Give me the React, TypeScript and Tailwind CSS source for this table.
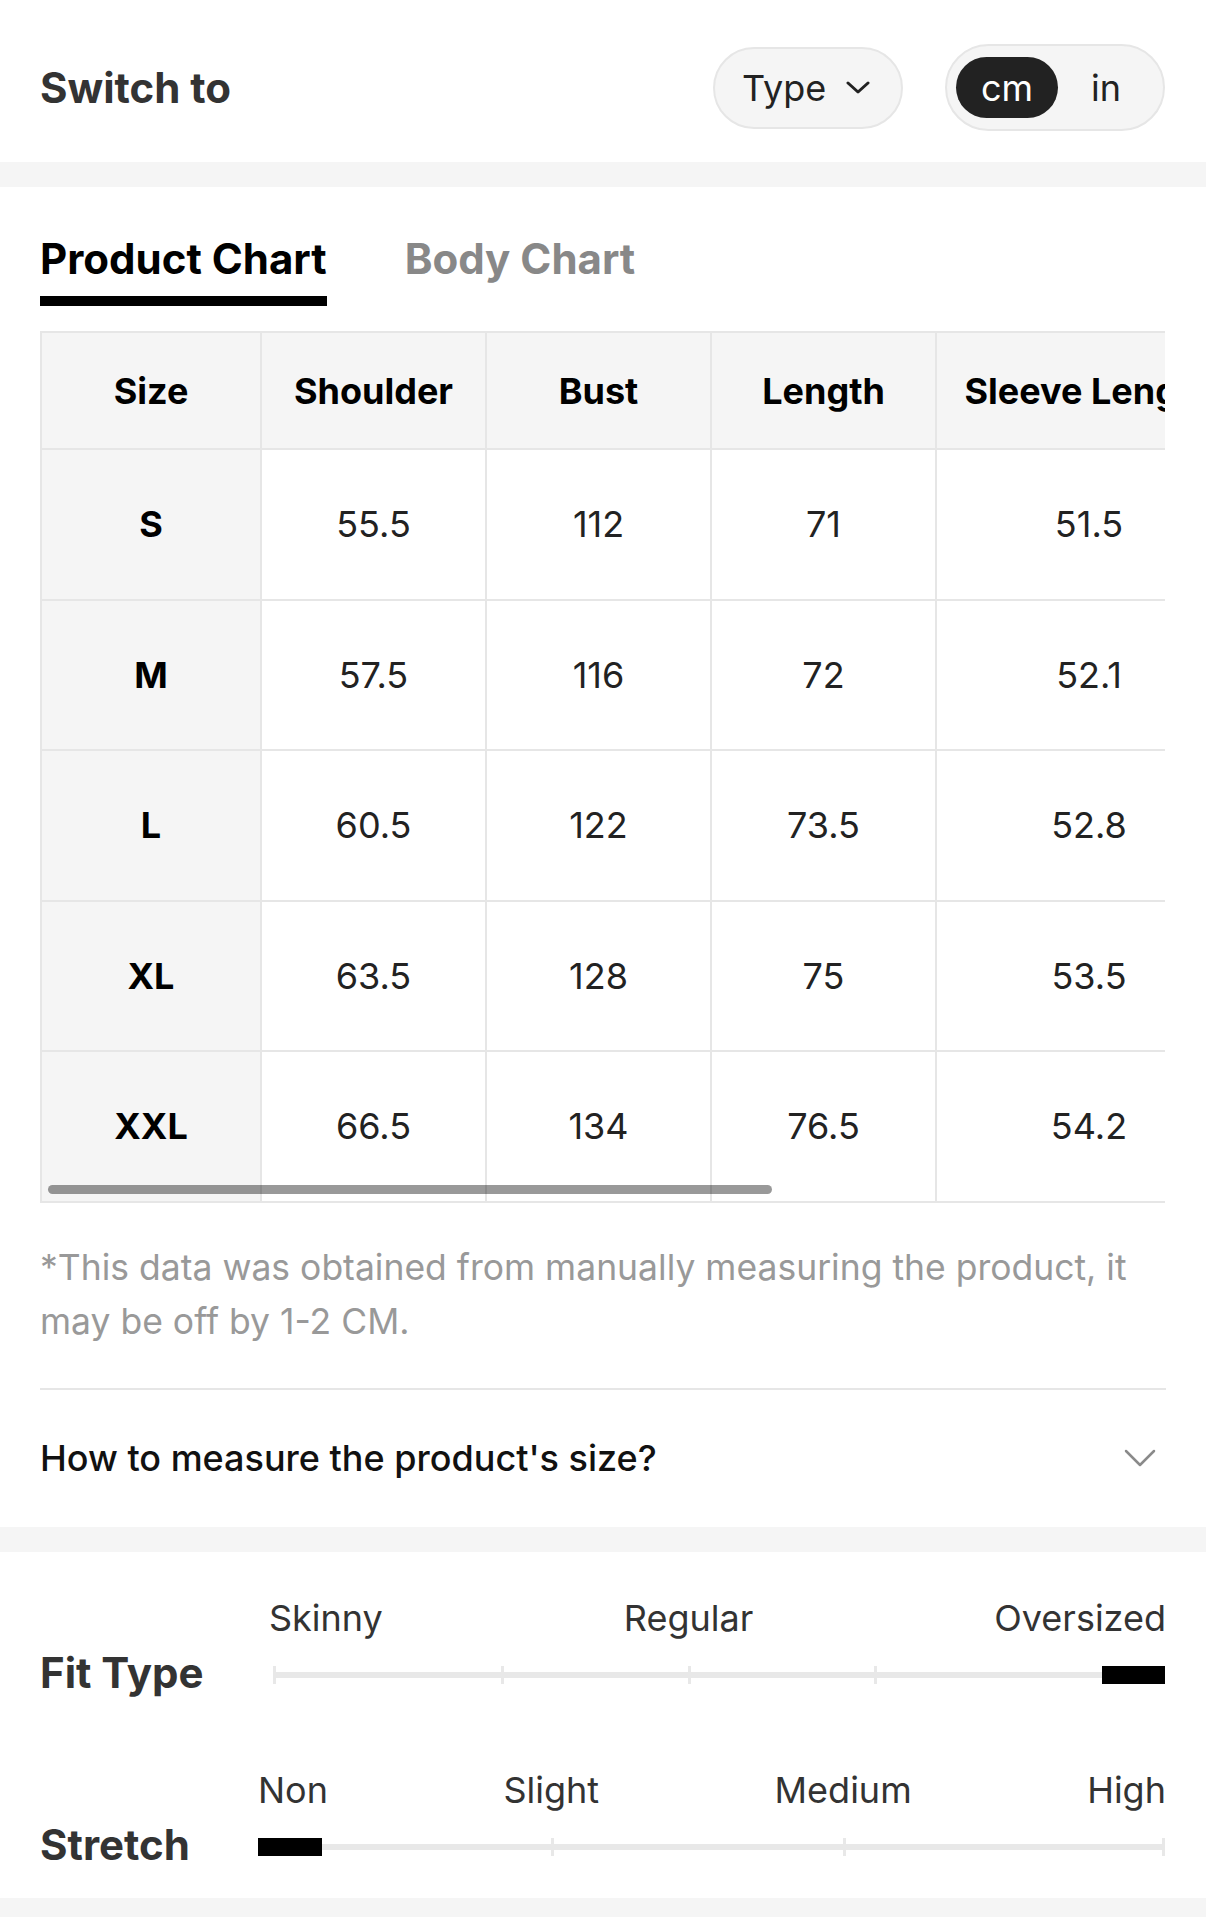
import React from "react";

const columns = [
  { key: "size", label: "Size", width: "w-[220px]" },
  { key: "shoulder", label: "Shoulder", width: "w-[225px]" },
  { key: "bust", label: "Bust", width: "w-[225px]" },
  { key: "length", label: "Length", width: "w-[225px]" },
  { key: "sleeve", label: "Sleeve Length", width: "w-[306px]" }
];

const rows = [
  { size: "S", shoulder: "55.5", bust: "112", length: "71", sleeve: "51.5" },
  { size: "M", shoulder: "57.5", bust: "116", length: "72", sleeve: "52.1" },
  { size: "L", shoulder: "60.5", bust: "122", length: "73.5", sleeve: "52.8" },
  { size: "XL", shoulder: "63.5", bust: "128", length: "75", sleeve: "53.5" },
  { size: "XXL", shoulder: "66.5", bust: "134", length: "76.5", sleeve: "54.2" }
];

type SliderProps = {
  title: string;
  labels: string[];
  trackWidth: number;
  ticks: number[];
  block: { left: number; width: number };
  offset?: boolean;
};

const Slider: React.FC<SliderProps> = ({ title, labels, trackWidth, ticks, block, offset }) => {
  return (
    <div className="grid grid-cols-[218px_1fr]">
      <div />
      <div className={`flex justify-between text-[36px] leading-[44px] text-[#333] ${offset ? "pl-[11px]" : ""}`}>
        {labels.map(l => (
          <span key={l}>{l}</span>
        ))}
      </div>
      <div className="mt-[8px] text-[42px] font-bold leading-[50px] text-[#333]">{title}</div>
      <div className={`mt-[8px] flex items-center pt-[5px] ${offset ? "pl-[15px]" : ""}`}>
        {/* track */}
        <div className="relative h-[6px] bg-[#e8e8e8]" style={{ width: trackWidth }}>
          {ticks.map(t => (
            <span key={t} className="absolute top-[-6px] h-[18px] w-[3px] bg-[#e8e8e8]" style={{ left: t }} />
          ))}
          <span className="absolute top-[-6px] h-[18px] bg-black" style={{ left: block.left, width: block.width }} />
        </div>
      </div>
    </div>
  );
};

const App: React.FC = () => {
  return (
    <div className="w-[1206px] bg-white font-['Inter','Liberation_Sans',sans-serif] text-[#222]">
      {/* Switch header */}
      <div className="flex items-center justify-between pl-10 pr-[41px] pt-[44px] pb-[31px]">
        <h2 className="text-[42px] font-bold leading-[50px] text-[#333]">Switch to</h2>
        <div className="flex items-center gap-[42px]">
          <button className="flex h-[82px] w-[190px] items-center gap-[20px] rounded-full border-2 border-[#e6e6e6] bg-[#f5f5f5] pl-[27px] text-[36px] text-[#222]">
            Type
            <svg width="24" height="14" viewBox="0 0 24 14" fill="none">
              <polyline points="2,2 12,11 22,2" stroke="#222" strokeWidth="3" strokeLinecap="round" strokeLinejoin="round" />
            </svg>
          </button>
          <div className="flex h-[87px] w-[220px] items-center rounded-full border-2 border-[#e6e6e6] bg-[#f5f5f5] pl-[9px] text-[36px]">
            <span className="flex h-[61px] w-[102px] items-center justify-center rounded-full bg-[#222] text-white">cm</span>
            <span className="w-[96px] text-center text-[#222]">in</span>
          </div>
        </div>
      </div>

      <div className="h-[25px] bg-[#f5f5f5]" />

      {/* Chart */}
      <div className="px-10 pt-[47px]">
        <div className="flex gap-[78px]">
          <div className="flex flex-col">
            <span className="text-[42px] font-bold leading-[50px] text-black">Product Chart</span>
            <span className="mt-[12px] h-[10px] bg-black" />
          </div>
          <div className="flex flex-col">
            <span className="text-[42px] font-bold leading-[50px] text-[#888]">Body Chart</span>
          </div>
        </div>

        <div className="relative mt-[25px] w-[1125px] overflow-hidden">
          <div className="w-max border-l-2 border-t-2 border-[#e6e6e6]">
            <div className="flex bg-[#f5f5f5]">
              {columns.map(c => (
                <div
                  key={c.key}
                  className={`${c.width} flex h-[117px] shrink-0 items-center justify-center border-b-2 border-r-2 border-[#e6e6e6] text-[36px] font-bold text-black`}
                >
                  {c.label}
                </div>
              ))}
            </div>
            {rows.map(r => (
              <div key={r.size} className="flex">
                {columns.map(c => (
                  <div
                    key={c.key}
                    className={`${c.width} flex h-[150.5px] shrink-0 items-center justify-center border-b-2 border-r-2 border-[#e6e6e6] text-[36px] ${
                      c.key === "size" ? "bg-[#f5f5f5] font-bold text-black" : "text-[#222]"
                    }`}
                  >
                    {r[c.key as keyof typeof r]}
                  </div>
                ))}
              </div>
            ))}
          </div>
          {/* scrollbar */}
          <div className="absolute bottom-[9px] left-[8px] h-[9px] w-[724px] rounded-full bg-black/40" />
        </div>

        <p className="mt-[38px] text-[35.5px] leading-[54px] text-[#999]">
          *This data was obtained from manually measuring the product, it may be off by 1-2 CM.
        </p>

        <div className="mt-[39px] h-[2px] bg-[#e6e6e6]" />

        <div className="flex h-[137px] items-center justify-between">
          <span className="text-[36px] font-medium text-[#111]">How to measure the product's size?</span>
          <svg width="32" height="18" viewBox="0 0 32 18" fill="none" className="mr-[10px]">
            <polyline points="2,2 16,16 30,2" stroke="#8a8a8a" strokeWidth="2.5" strokeLinecap="round" strokeLinejoin="round" />
          </svg>
        </div>
      </div>

      <div className="h-[25px] bg-[#f5f5f5]" />

      {/* Fit & stretch */}
      <div className="px-10 pt-[44px] pb-[28px]">
        <Slider
          title="Fit Type"
          labels={["Skinny", "Regular", "Oversized"]}
          trackWidth={892}
          ticks={[0, 228, 415, 601]}
          block={{ left: 829, width: 63 }}
          offset
        />
        <div className="mt-[70px]">
          <Slider
            title="Stretch"
            labels={["Non", "Slight", "Medium", "High"]}
            trackWidth={907}
            ticks={[293, 585, 904]}
            block={{ left: 0, width: 64 }}
          />
        </div>
      </div>

      <div className="h-[25px] bg-[#f5f5f5]" />
    </div>
  );
};

export default App;
